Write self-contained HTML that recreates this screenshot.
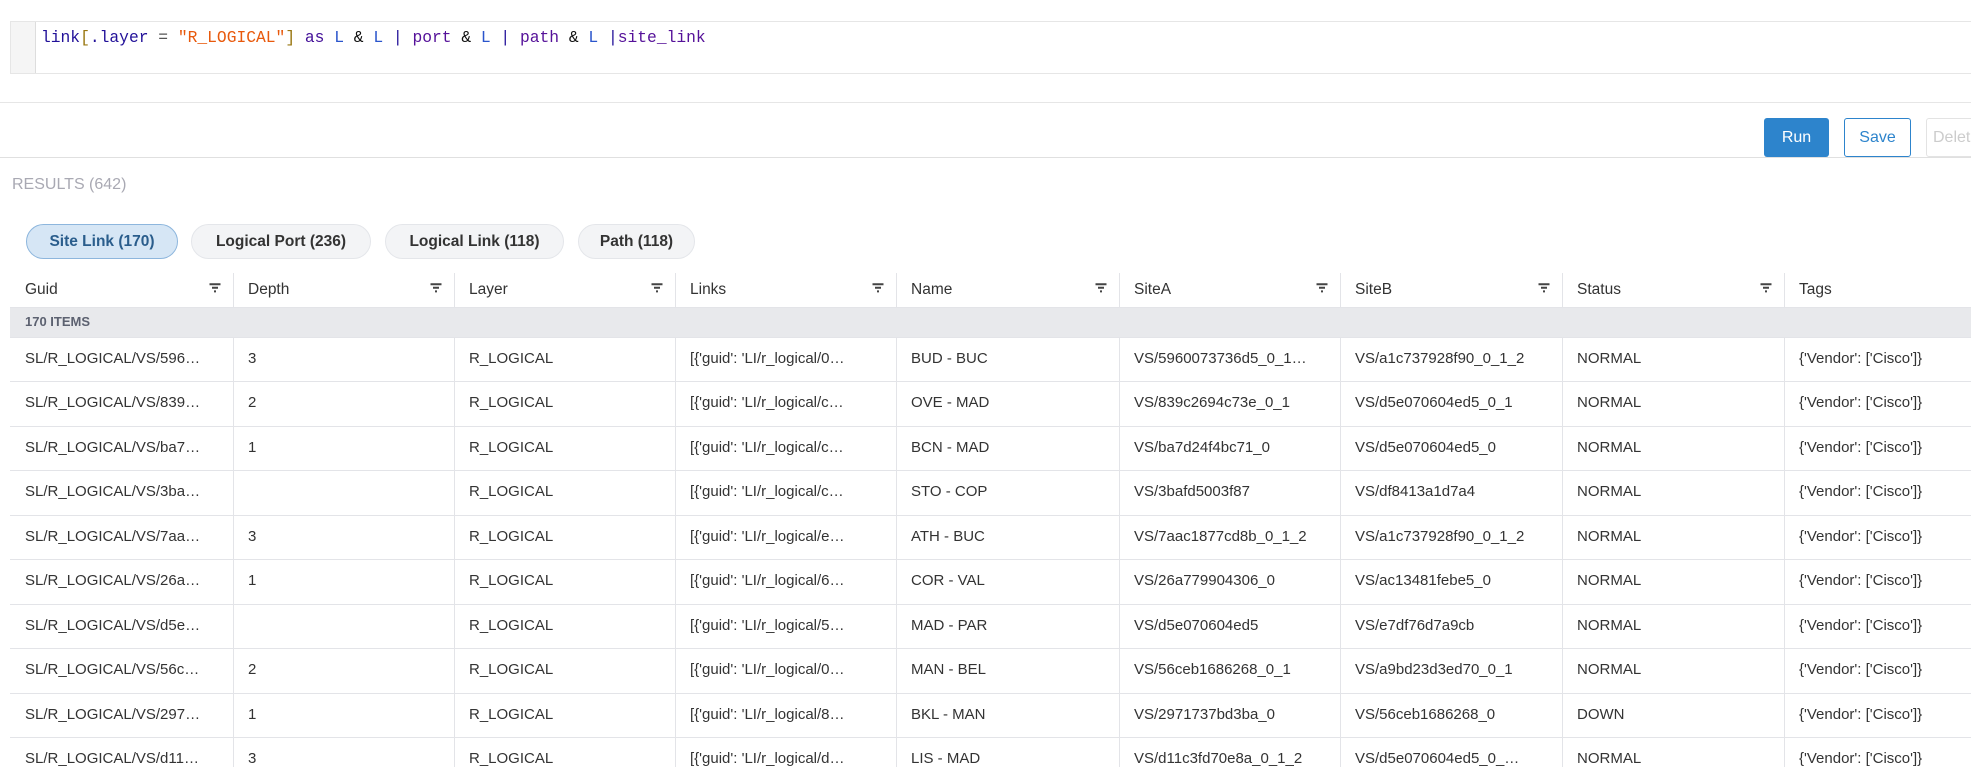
<!DOCTYPE html>
<html><head><meta charset="utf-8"><style>
*{box-sizing:border-box;margin:0;padding:0}
body{width:1971px;height:767px;overflow:hidden;background:#fff;font-family:"Liberation Sans",sans-serif;color:#222;position:relative}
.abs{position:absolute}
.editor{left:10px;top:21px;width:1961px;height:53px;border:1px solid #e6e6e6;border-right:none}
.gutter{left:0;top:0;width:25px;height:100%;background:#f5f5f5;border-right:1px solid #ddd}
.code{left:30px;top:6px;font-family:"Liberation Mono",monospace;font-size:16.3px;white-space:pre;color:#221199}
.btn{top:118px;height:39px;border-radius:3px;font-size:16px;display:flex;align-items:center;justify-content:center}
.pill{top:224px;height:35px;border-radius:18px;background:#f3f4f6;border:1px solid #e4e6ea;font-weight:bold;font-size:15.5px;display:flex;align-items:center;justify-content:center;color:#333}
.cell{position:absolute;font-size:15px;color:#333;white-space:nowrap;overflow:hidden}
.vl{position:absolute;width:1px;background:#e3e4e8}
.hl{position:absolute;left:10px;right:0;height:1px;background:#e3e4e8}
.fi{position:absolute;width:12px;height:10px}
</style></head><body>
<div class="abs editor"><div class="abs gutter"></div>
<div class="abs code">link<span style="color:#997711">[</span>.layer <span style="color:#555">=</span> <span style="color:#e8590c">"R_LOGICAL"</span><span style="color:#997711">]</span> <span style="color:#441199">as</span> <span style="color:#2a55cc">L</span> <span style="color:#111">&amp;</span> <span style="color:#2a55cc">L</span> | <span style="color:#551199">port</span> <span style="color:#111">&amp;</span> <span style="color:#2a55cc">L</span> | <span style="color:#551199">path</span> <span style="color:#111">&amp;</span> <span style="color:#2a55cc">L</span> |<span style="color:#551199">site_link</span></div></div>
<div class="abs" style="left:0;right:0;top:102px;height:1px;background:#e6e6e6"></div>
<div class="abs" style="left:0;right:0;top:157px;height:1px;background:#e0e0e0"></div>
<div class="abs btn" style="left:1764px;width:65px;background:#2d84cc;color:#fff">Run</div>
<div class="abs btn" style="left:1844px;width:67px;border:1px solid #2d84cc;color:#2d84cc">Save</div>
<div class="abs btn" style="left:1926px;width:60px;border:1px solid #e3e3e3;color:#ccc;justify-content:flex-start;padding-left:6px">Delete</div>
<div class="abs" style="left:12px;top:176px;font-size:16px;color:#a9a9b3">RESULTS (642)</div>
<div class="abs pill" style="left:26px;width:152px;background:#d6e6f5;border-color:#8db6dd;color:#2a5d8c">Site Link (170)</div>
<div class="abs pill" style="left:191px;width:180px">Logical Port (236)</div>
<div class="abs pill" style="left:385px;width:179px">Logical Link (118)</div>
<div class="abs pill" style="left:578px;width:117px">Path (118)</div>
<div class="abs" style="left:10px;right:0;top:308px;height:29px;background:#e8e9ec"></div>
<div class="abs" style="left:25px;top:314px;font-size:13px;font-weight:bold;color:#5c6170">170 ITEMS</div>
<div id="t"></div>
<script>
var L=[10,233,454,675,896,1119,1340,1562,1784];
var H=["Guid","Depth","Layer","Links","Name","SiteA","SiteB","Status","Tags"];
var R=[
["SL/R_LOGICAL/VS/596…","3","R_LOGICAL","[{'guid': 'LI/r_logical/0…","BUD - BUC","VS/5960073736d5_0_1…","VS/a1c737928f90_0_1_2","NORMAL","{'Vendor': ['Cisco']}"],
["SL/R_LOGICAL/VS/839…","2","R_LOGICAL","[{'guid': 'LI/r_logical/c…","OVE - MAD","VS/839c2694c73e_0_1","VS/d5e070604ed5_0_1","NORMAL","{'Vendor': ['Cisco']}"],
["SL/R_LOGICAL/VS/ba7…","1","R_LOGICAL","[{'guid': 'LI/r_logical/c…","BCN - MAD","VS/ba7d24f4bc71_0","VS/d5e070604ed5_0","NORMAL","{'Vendor': ['Cisco']}"],
["SL/R_LOGICAL/VS/3ba…","","R_LOGICAL","[{'guid': 'LI/r_logical/c…","STO - COP","VS/3bafd5003f87","VS/df8413a1d7a4","NORMAL","{'Vendor': ['Cisco']}"],
["SL/R_LOGICAL/VS/7aa…","3","R_LOGICAL","[{'guid': 'LI/r_logical/e…","ATH - BUC","VS/7aac1877cd8b_0_1_2","VS/a1c737928f90_0_1_2","NORMAL","{'Vendor': ['Cisco']}"],
["SL/R_LOGICAL/VS/26a…","1","R_LOGICAL","[{'guid': 'LI/r_logical/6…","COR - VAL","VS/26a779904306_0","VS/ac13481febe5_0","NORMAL","{'Vendor': ['Cisco']}"],
["SL/R_LOGICAL/VS/d5e…","","R_LOGICAL","[{'guid': 'LI/r_logical/5…","MAD - PAR","VS/d5e070604ed5","VS/e7df76d7a9cb","NORMAL","{'Vendor': ['Cisco']}"],
["SL/R_LOGICAL/VS/56c…","2","R_LOGICAL","[{'guid': 'LI/r_logical/0…","MAN - BEL","VS/56ceb1686268_0_1","VS/a9bd23d3ed70_0_1","NORMAL","{'Vendor': ['Cisco']}"],
["SL/R_LOGICAL/VS/297…","1","R_LOGICAL","[{'guid': 'LI/r_logical/8…","BKL - MAN","VS/2971737bd3ba_0","VS/56ceb1686268_0","DOWN","{'Vendor': ['Cisco']}"],
["SL/R_LOGICAL/VS/d11…","3","R_LOGICAL","[{'guid': 'LI/r_logical/d…","LIS - MAD","VS/d11c3fd70e8a_0_1_2","VS/d5e070604ed5_0_…","NORMAL","{'Vendor': ['Cisco']}"]];
var h="";
for(var i=0;i<9;i++){
 h+='<div class="cell" style="left:'+(L[i]+15)+'px;top:281px;font-size:15.5px">'+H[i]+'</div>';
 if(i<8)h+='<svg class="fi" style="left:'+(L[i+1]-24)+'px;top:283px" viewBox="0 0 12 10"><path d="M0.5 1.2h11M3 4.8h6M5 8.4h2" stroke="#444" stroke-width="2"/></svg>';
 if(i>0){h+='<div class="vl" style="left:'+L[i]+'px;top:273px;height:35px"></div>';h+='<div class="vl" style="left:'+L[i]+'px;top:337px;height:430px"></div>';}
}
h+='<div class="hl" style="top:307px"></div>';
for(var r=0;r<R.length;r++){
 var y=337+r*44.5;
 h+='<div class="hl" style="top:'+(y|0)+'px"></div>';
 for(var c=0;c<9;c++)h+='<div class="cell" style="left:'+(L[c]+15)+'px;top:'+(y+13|0)+'px;width:'+((L[c+1]||1971)-L[c]-20)+'px">'+R[r][c]+'</div>';
}
document.getElementById("t").innerHTML=h;
</script>
</body></html>
